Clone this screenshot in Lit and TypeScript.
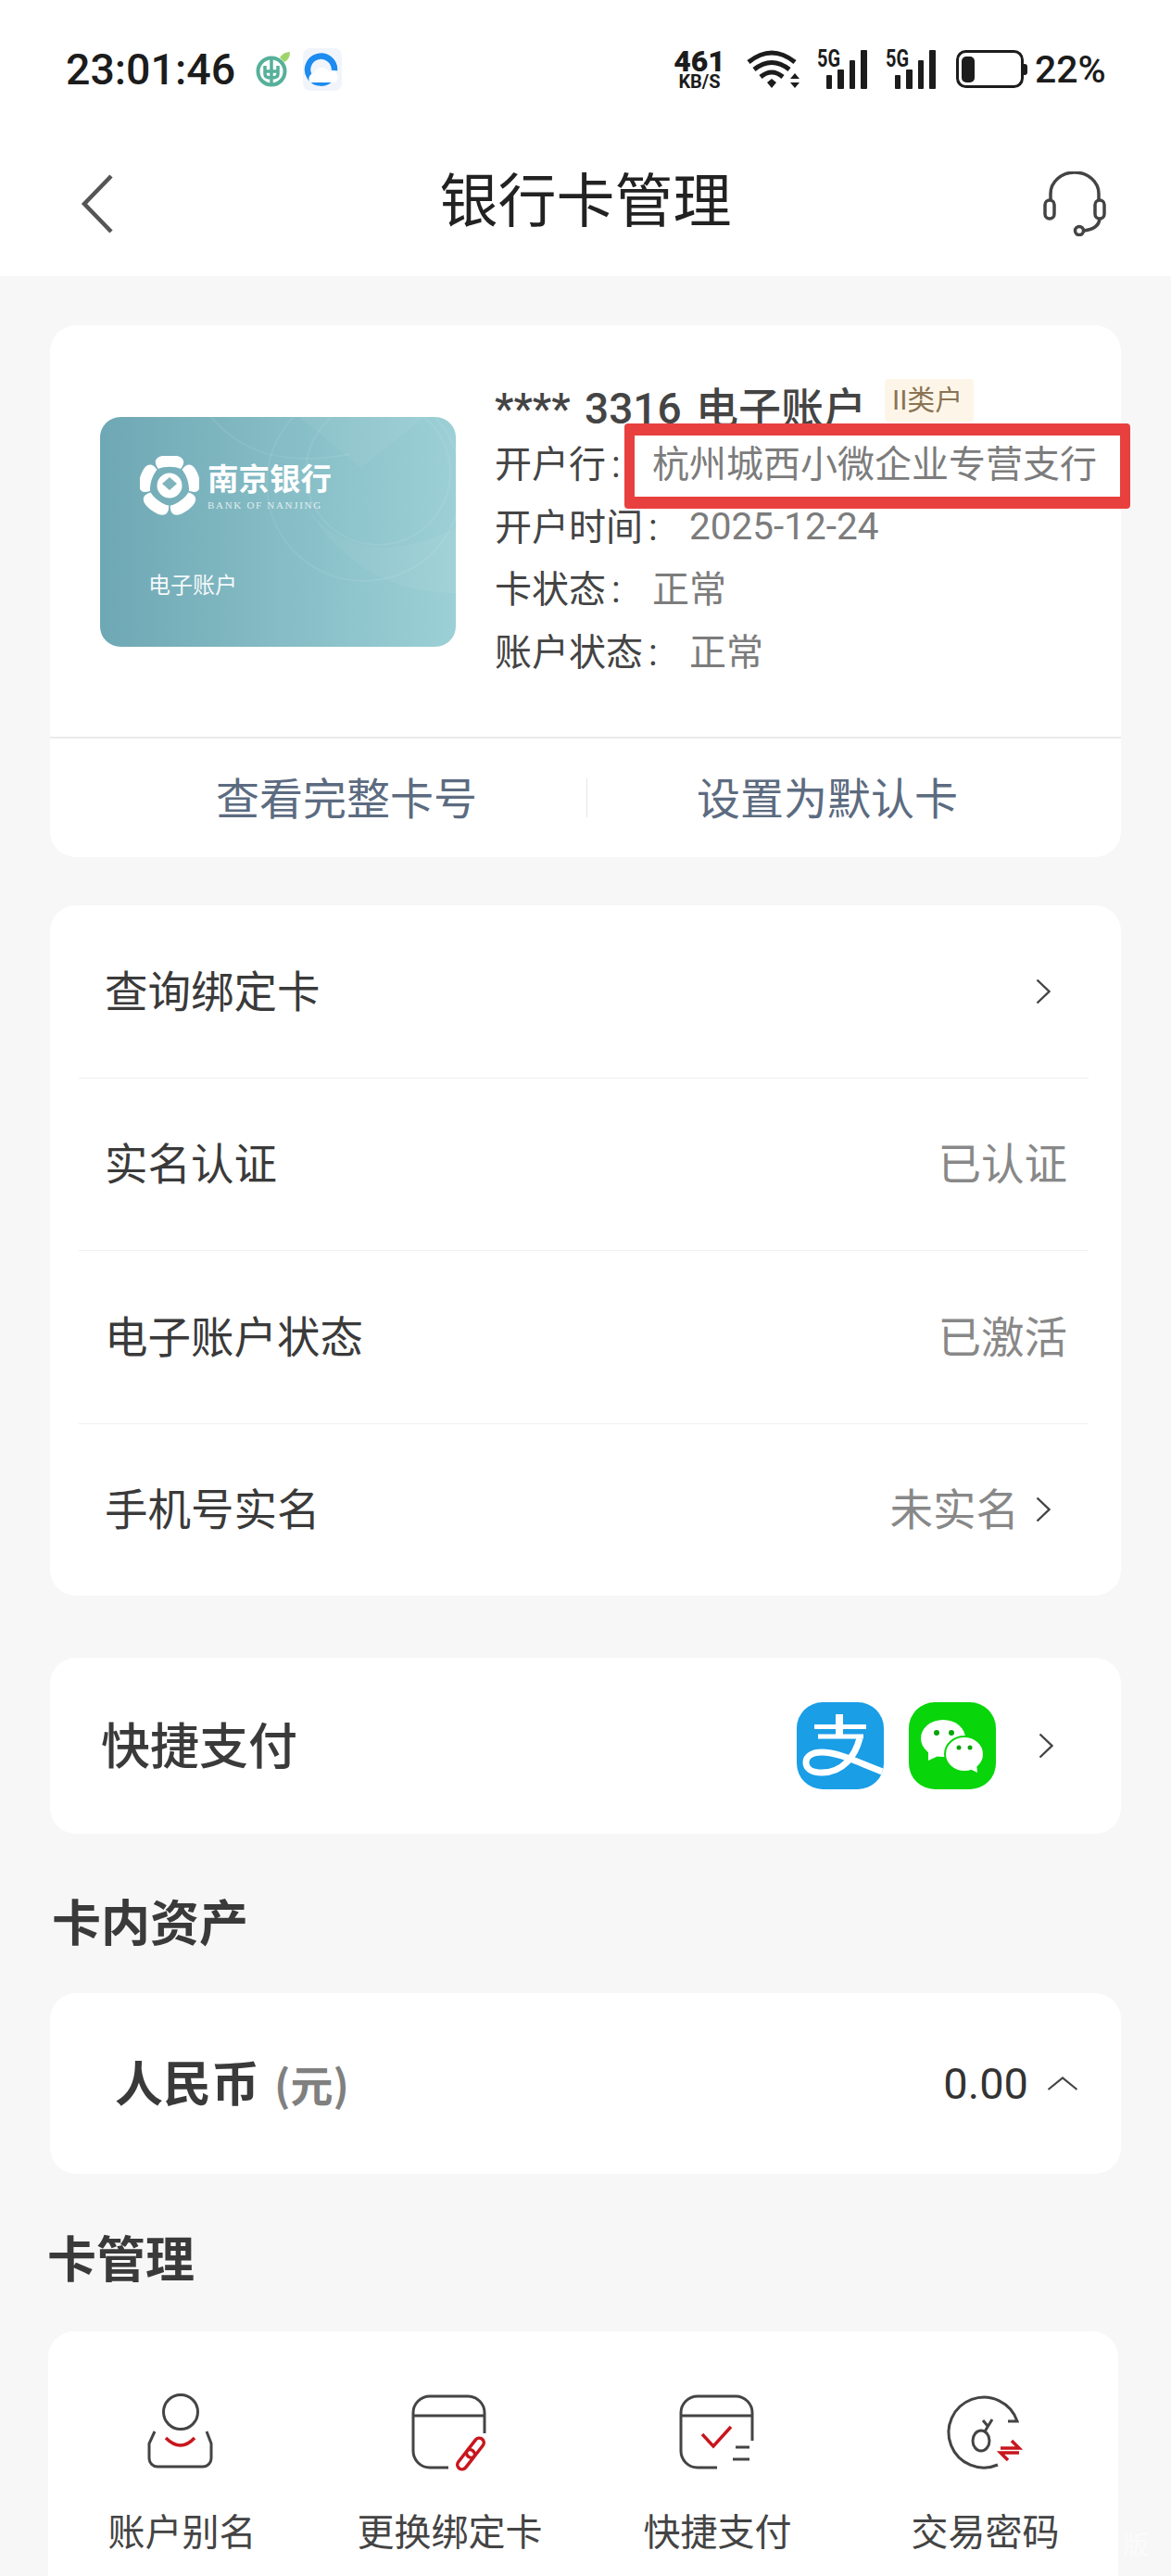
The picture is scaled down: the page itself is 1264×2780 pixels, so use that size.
import { css, html, LitElement, svg } from "lit";
import { customElement } from "lit/decorators.js";

const chevron = html`<svg class="chev" width="16" height="28" viewBox="0 0 16 28">
  <path d="M1.5 1.5 14.5 14 1.5 26.5" fill="none" stroke="#444" stroke-width="2.4" />
</svg>`;

const signal = html`<svg class="signal" width="56" height="44" viewBox="0 0 56 44">
  <text x="1" y="19" class="five-g" textLength="25" lengthAdjust="spacingAndGlyphs">5G</text>
  <rect x="11" y="28" width="6" height="15" rx="1" fill="#1c1c1c" />
  <rect x="23" y="22" width="7" height="21" rx="1" fill="#1c1c1c" />
  <rect x="36" y="12" width="6" height="31" rx="1" fill="#1c1c1c" />
  <rect x="48" y="1" width="7" height="42" rx="1" fill="#1c1c1c" />
</svg>`;

const manageItems = [
  {
    label: "账户别名",
    icon: svg`
      <circle cx="40" cy="22" r="18.5" class="ln" />
      <path class="ln" d="M12 43 6 56V72a9 9 0 0 0 9 9H64a9 9 0 0 0 9-9V56L68 43" />
      <path class="rd" d="M24 50Q40 66 55 50" />`,
  },
  {
    label: "更换绑定卡",
    icon: svg`
      <path class="ln" d="M79 45V23A18 18 0 0 0 61 5H20A18 18 0 0 0 2 23V64A18 18 0 0 0 20 82H40" />
      <path class="ln" d="M2 26H79" />
      <g transform="rotate(38 64 67)">
        <rect x="59" y="47" width="10" height="24" rx="5" class="rd" />
        <rect x="59" y="63" width="10" height="24" rx="5" class="rd" />
      </g>`,
  },
  {
    label: "快捷支付",
    icon: svg`
      <path class="ln" d="M79 53V23A18 18 0 0 0 61 5H20A18 18 0 0 0 2 23V64A18 18 0 0 0 20 82H41" />
      <path class="ln" d="M2 26H79" />
      <path class="rd" d="M25 46 37 59 56 38" />
      <path class="ln" d="M61 60H76M58 73H76" />`,
  },
  {
    label: "交易密码",
    icon: svg`
      <path class="ln" d="M55 79A38 38 0 1 1 76 32H66" />
      <ellipse cx="37" cy="53" rx="9" ry="11" class="ln" />
      <path class="ln" d="M41 43 49 30M44 37 39 31" />
      <path class="rd" d="M58 61H78L70 53M78 66H58L66 74" />`,
  },
];

@customElement("app-root")
export class AppRoot extends LitElement {
  private renderStatusBar() {
    return html`
      <div class="status">
        <span class="time">23:01:46</span>
        <svg class="abc" width="38" height="38" viewBox="0 0 38 38">
          <circle cx="18" cy="21" r="14.5" fill="none" stroke="#56b09a" stroke-width="4" />
          <path d="M18 6V36M11 15V24Q11 28 18 28Q25 28 25 24V15M12 21H24" fill="none" stroke="#56b09a" stroke-width="3.5" />
          <path d="M27 6Q31 0 38 0Q38 8 32 11Z" fill="#9fd36c" />
        </svg>
        <svg class="cloud" width="42" height="46" viewBox="0 0 42 46">
          <rect width="42" height="46" rx="8" fill="#f1f5fb" />
          <path d="M31 32A14.5 14.5 0 1 1 34 24" fill="none" stroke="#1d8bf0" stroke-width="6.5" />
          <path d="M8 37a6 6 0 0 1 4-10 9 9 0 0 1 16-2 7 7 0 0 1 7 12Z" fill="#fff" />
        </svg>
        <span class="grow"></span>
        <div class="speed"><b>461</b><small>KB/S</small></div>
        <svg class="wifi" width="58" height="42" viewBox="0 0 58 42">
          <path d="M3 13Q28 -7 53 13M9 21Q28 6 47 21M16 29Q28 19 40 29" fill="none" stroke="#1c1c1c" stroke-width="5" />
          <path d="M23 35 28 31 33 35 28 41ZM48 31 53 25 58 31ZM48 35H58L53 41Z" fill="#1c1c1c" />
        </svg>
        ${signal} ${signal}
        <svg class="batt" width="78" height="42" viewBox="0 0 78 42">
          <rect x="1.5" y="1.5" width="70" height="38" rx="9" fill="none" stroke="#1c1c1c" stroke-width="3" />
          <rect x="6" y="7" width="14" height="28" rx="5" fill="#1c1c1c" />
          <path d="M73 15h1a3 3 0 0 1 3 3v6a3 3 0 0 1-3 3h-1Z" fill="#1c1c1c" />
        </svg>
        <span class="pct">22%</span>
      </div>
    `;
  }

  private renderNav() {
    return html`
      <div class="nav">
        <svg width="36" height="64" viewBox="0 0 36 64">
          <path d="M33 2 4 32 33 62" fill="none" stroke="#555" stroke-width="4.5" />
        </svg>
        <h1>银行卡管理</h1>
        <svg width="68" height="70" viewBox="0 0 68 70">
          <path d="M8 32V24A26 23 0 0 1 60 24V32" fill="none" stroke="#444" stroke-width="3.5" />
          <rect x="2" y="31" width="10" height="20" rx="5" fill="none" stroke="#444" stroke-width="3.5" />
          <rect x="56" y="31" width="10" height="20" rx="5" fill="none" stroke="#444" stroke-width="3.5" />
          <path d="M61 51Q60 62 44 64" fill="none" stroke="#444" stroke-width="3.5" />
          <circle cx="39" cy="64" r="4.5" fill="none" stroke="#444" stroke-width="3.5" />
        </svg>
      </div>
    `;
  }

  private renderBankCard() {
    return html`
      <div class="bank">
        <svg class="bank-bg" width="384" height="248" viewBox="0 0 384 248">
          <g fill="none" stroke="#fff" stroke-opacity="0.08" stroke-width="2">
            <circle cx="285" cy="72" r="105" />
            <circle cx="300" cy="60" r="78" />
            <path d="M120 0Q170 60 270 40" />
          </g>
          <path d="M215 0 282 55 350 0Z M225 100Q280 170 384 120V190Q280 190 225 100Z" fill="#fff" fill-opacity="0.05" />
        </svg>
        <div class="brand">
          <svg width="64" height="64" viewBox="-32 -32 64 64">
            ${[0, 72, 144, 216, 288].map(
              (a) => svg`<path transform="rotate(${a})" d="M-12 -18C-20 -28 -12 -33 0 -33C12 -33 20 -28 12 -18C6 -21 -6 -21 -12 -18Z" fill="#fff" />`
            )}
            <circle r="13.500" fill="#fff" />
            <path d="M-8 -2 0 -9 8 -2 0 5Z" fill="#7fb4bd" />
          </svg>
          <div>
            <div class="brand-cn">南京银行</div>
            <div class="brand-en">BANK OF NANJING</div>
          </div>
        </div>
        <div class="bank-type">电子账户</div>
      </div>
    `;
  }

  private renderAlipay() {
    return html`<svg width="94" height="94" viewBox="0 0 94 94">
      <defs><clipPath id="ali"><rect width="94" height="94" rx="28" /></clipPath></defs>
      <g clip-path="url(#ali)">
        <rect width="94" height="94" fill="#1a9ee6" />
        <path d="M19 26.5H75M23 37H72" stroke="#fff" stroke-width="5" fill="none" />
        <path d="M46 13V36" stroke="#fff" stroke-width="8" fill="none" />
        <path d="M68 39C63 58 50 76 27 76C15 76 10 71 10 65C10 58 17 54 27 54C46 54 68 66 98 77" stroke="#fff" stroke-width="7" fill="none" />
      </g>
    </svg>`;
  }

  private renderWechat() {
    return html`<svg width="94" height="94" viewBox="0 0 94 94">
      <rect width="94" height="94" rx="28" fill="#08d50a" />
      <ellipse cx="37" cy="39" rx="24" ry="20" fill="#fff" />
      <path d="M21 52 21 63 34 57Z" fill="#fff" />
      <ellipse cx="60" cy="56" rx="21" ry="19" fill="#fff" stroke="#08d50a" stroke-width="2" />
      <path d="M66 72 74 76 73 66Z" fill="#fff" />
      <circle cx="30" cy="33" r="3" fill="#08a50a" />
      <circle cx="46" cy="33" r="3" fill="#08a50a" />
      <circle cx="54" cy="49" r="2.5" fill="#08a50a" />
      <circle cx="66" cy="49" r="2.5" fill="#08a50a" />
    </svg>`;
  }

  render() {
    return html`
      <header>${this.renderStatusBar()} ${this.renderNav()}</header>
      <main>
        <section class="card first">
          <div class="top">
            ${this.renderBankCard()}
            <div class="info">
              <div class="title"><span>**** 3316 电子账户</span><span class="badge">II类户</span></div>
              <div class="row"><span class="key">开户行<i>:</i></span><span class="val">杭州城西小微企业专营支行</span></div>
              <div class="row"><span class="key">开户时间<i>:</i></span><span class="val date">2025-12-24</span></div>
              <div class="row"><span class="key">卡状态<i>:</i></span><span class="val">正常</span></div>
              <div class="row"><span class="key">账户状态<i>:</i></span><span class="val">正常</span></div>
            </div>
          </div>
          <div class="actions">
            <span class="act-left">查看完整卡号</span>
            <span class="sep"></span>
            <span class="act-right">设置为默认卡</span>
          </div>
          <div class="mark"></div>
        </section>

        <section class="card list">
          <div class="item"><span>查询绑定卡</span>${chevron}</div>
          <hr />
          <div class="item"><span>实名认证</span><span class="muted">已认证</span></div>
          <hr />
          <div class="item"><span>电子账户状态</span><span class="muted">已激活</span></div>
          <hr />
          <div class="item"><span>手机号实名</span><span class="muted with-chev">未实名</span>${chevron}</div>
        </section>

        <section class="card pay">
          <span class="pay-name">快捷支付</span>
          ${this.renderAlipay()} ${this.renderWechat()} ${chevron}
        </section>

        <h2 class="assets">卡内资产</h2>
        <section class="card rmb">
          <span class="rmb-name">人民币</span><span class="unit">(元)</span>
          <span class="amount">0.00</span>
          <svg width="34" height="15" viewBox="0 0 34 15">
            <path d="M1.5 14 17 1.5 32.500 14" fill="none" stroke="#444" stroke-width="2.2" />
          </svg>
        </section>

        <h2 class="manage-title">卡管理</h2>
        <section class="card manage">
          ${manageItems.map(
            (m) => html`<div class="tile">
              <svg width="84" height="84" viewBox="0 0 84 84">${m.icon}</svg>
              <span>${m.label}</span>
            </div>`
          )}
        </section>
      </main>
      <span class="watermark">版</span>
    `;
  }

  static styles = css`
    :host {
      display: flex;
      flex-direction: column;
      position: relative;
      height: 2780px;
      overflow: hidden;
      background: #f7f7f7;
      color: #3a3a3a;
      font-family: Roboto, "Noto Sans CJK SC", sans-serif;
    }

    header {
      background: #fff;
      height: 298px;
      flex: none;
    }

    .status {
      display: flex;
      align-items: center;
      height: 84px;
      padding: 33px 71px 0 71px;
      color: #1c1c1c;
    }

    .time {
      font-size: 46.5px;
      font-weight: 500;
      width: 204px;
    }

    .cloud {
      margin-left: 14px;
    }

    .grow {
      flex: 1;
    }

    .speed {
      display: flex;
      flex-direction: column;
      align-items: center;
      width: 58px;
      font-weight: 700;
      line-height: 1;
    }

    .speed b {
      font-size: 32px;
      line-height: 26px;
    }

    .speed small {
      font-size: 20px;
      line-height: 18px;
    }

    .wifi {
      margin-left: 21px;
    }

    .signal {
      margin-left: 18px;
      overflow: visible;
    }

    .five-g {
      font: 700 25px Roboto, sans-serif;
      fill: #1c1c1c;
    }

    .batt {
      margin-left: 21px;
    }

    .pct {
      font-size: 41px;
      font-weight: 500;
      margin-left: 7px;
      width: 76px;
      white-space: nowrap;
    }

    .nav {
      display: flex;
      align-items: center;
      justify-content: space-between;
      padding: 0 70px 0 87px;
      height: 70px;
      margin-top: 68px;
      position: relative;
    }

    .nav h1 {
      position: absolute;
      inset: 0;
      margin: 0;
      text-align: center;
      font-size: 63px;
      line-height: 66px;
      font-weight: 400;
      color: #222;
    }

    main {
      padding: 53px 54px 0;
      flex: 1;
      display: flex;
      flex-direction: column;
      min-height: 0;
    }

    .card {
      background: #fff;
      border-radius: 28px;
      flex: none;
    }

    .first {
      height: 574px;
      position: relative;
      display: flex;
      flex-direction: column;
    }

    .top {
      display: flex;
      gap: 42px;
      height: 446px;
      padding: 56px 0 0 54px;
      box-sizing: border-box;
      border-bottom: 2px solid #ebebed;
    }

    .bank {
      position: relative;
      flex: none;
      width: 384px;
      height: 248px;
      margin-top: 43px;
      border-radius: 22px;
      overflow: hidden;
      background: linear-gradient(90deg, #6ea8b4, #9cd0d6);
      color: #fff;
    }

    .bank-bg {
      position: absolute;
      inset: 0;
    }

    .brand {
      position: relative;
      display: flex;
      gap: 9px;
      padding: 42px 0 0 43px;
    }

    .brand-cn {
      font-size: 33.500px;
      font-weight: 700;
      line-height: 40px;
      margin-top: 6px;
      white-space: nowrap;
    }

    .brand-en {
      font: 11px/14px "Liberation Serif", serif;
      letter-spacing: 1.7px;
      opacity: 0.75;
      white-space: nowrap;
    }

    .bank-type {
      position: relative;
      font-size: 24px;
      padding-left: 52px;
      margin-top: 56px;
      opacity: 0.92;
    }

    .info {
      font-size: 40px;
      color: #444;
    }

    .title {
      display: flex;
      align-items: center;
      height: 60px;
      font-size: 46px;
      font-weight: 500;
      word-spacing: 4px;
      white-space: nowrap;
    }

    .badge {
      font-size: 30px;
      font-weight: 400;
      color: #8a7355;
      background: #fdf6e8;
      height: 46px;
      line-height: 46px;
      width: 96px;
      margin: -10px 0 0 20px;
      padding-left: 8px;
      box-sizing: border-box;
      border-radius: 4px;
    }

    .row {
      display: flex;
      align-items: center;
      height: 67.500px;
      white-space: nowrap;
    }

    .row span {
      margin-bottom: 5px;
    }

    .key i {
      display: inline-block;
      width: 50px;
      padding-left: 6px;
      box-sizing: border-box;
      font-style: normal;
    }

    .val {
      color: #7c7c7c;
    }

    .row .date {
      margin-bottom: 0;
      font-size: 40.500px;
    }

    .actions {
      flex: 1;
      display: flex;
      align-items: center;
      justify-content: center;
      font-size: 47px;
      color: #5c6b80;
      padding-left: 3px;
    }

    .act-left {
      margin: 0 118px 6px 0;
    }

    .act-right {
      margin: 0 0 6px 118px;
    }

    .sep {
      width: 1px;
      height: 42px;
      background: #e6e6e6;
    }

    .mark {
      position: absolute;
      left: 620px;
      top: 106px;
      width: 546px;
      height: 92px;
      box-sizing: border-box;
      border: solid #e8403f;
      border-width: 13px 11px;
      border-radius: 4px;
    }

    .list {
      margin-top: 52px;
      display: flex;
      flex-direction: column;
    }

    .item {
      display: flex;
      align-items: center;
      justify-content: space-between;
      height: 185.500px;
      padding: 0 58px 0 59px;
      font-size: 46.500px;
    }

    .item span {
      margin-bottom: 7px;
    }

    .item .chev {
      margin-right: 18px;
    }

    .muted {
      color: #888;
    }

    .item .with-chev {
      margin-left: auto;
      margin-right: 18px;
    }

    hr {
      border: 0;
      height: 1px;
      background: #f0f0f0;
      margin: 0 35px 0 31px;
    }

    .pay {
      margin-top: 67px;
      height: 190px;
      display: flex;
      align-items: center;
      padding: 0 73px 0 55px;
      gap: 27px;
    }

    .pay-name {
      flex: 1;
      font-size: 53px;
      font-weight: 500;
      margin-bottom: 7px;
    }

    .pay .chev {
      margin-left: 19px;
    }

    h2 {
      margin: 0;
      font-size: 53px;
      font-weight: 700;
      line-height: 60px;
      flex: none;
    }

    .assets {
      padding: 68px 0 44px 2px;
    }

    .rmb {
      height: 195px;
      display: flex;
      align-items: center;
      padding: 0 46px 0 70px;
    }

    .rmb-name {
      font-size: 52px;
      font-weight: 700;
      margin-bottom: 6px;
    }

    .unit {
      font-size: 46px;
      font-weight: 700;
      color: #808080;
      margin: 0 auto 2px 16px;
      font-family: "Noto Sans CJK SC", sans-serif;
    }

    .amount {
      font-size: 47px;
      font-weight: 400;
      color: #333;
      margin-right: 20px;
    }

    .manage-title {
      padding: 64px 0 46px;
      margin-left: -3px;
    }

    .manage {
      flex: 1;
      margin: 0 3px 0 -2px;
      display: grid;
      grid-template-columns: repeat(4, 289px);
      align-content: start;
      padding-top: 65px;
      border-radius: 28px 28px 0 0;
    }

    .tile {
      display: flex;
      flex-direction: column;
      align-items: center;
      gap: 39px;
      font-size: 40px;
      line-height: 60px;
      color: #444;
      white-space: nowrap;
    }

    .tile svg {
      overflow: visible;
    }

    .ln {
      fill: none;
      stroke: #444;
      stroke-width: 3;
    }

    .rd {
      fill: none;
      stroke: #c8161d;
      stroke-width: 3.5;
    }

    .watermark {
      position: absolute;
      left: 1212px;
      top: 2732px;
      font-size: 28px;
      line-height: 32px;
      color: #fff;
      opacity: 0.5;
    }
  `;
}
